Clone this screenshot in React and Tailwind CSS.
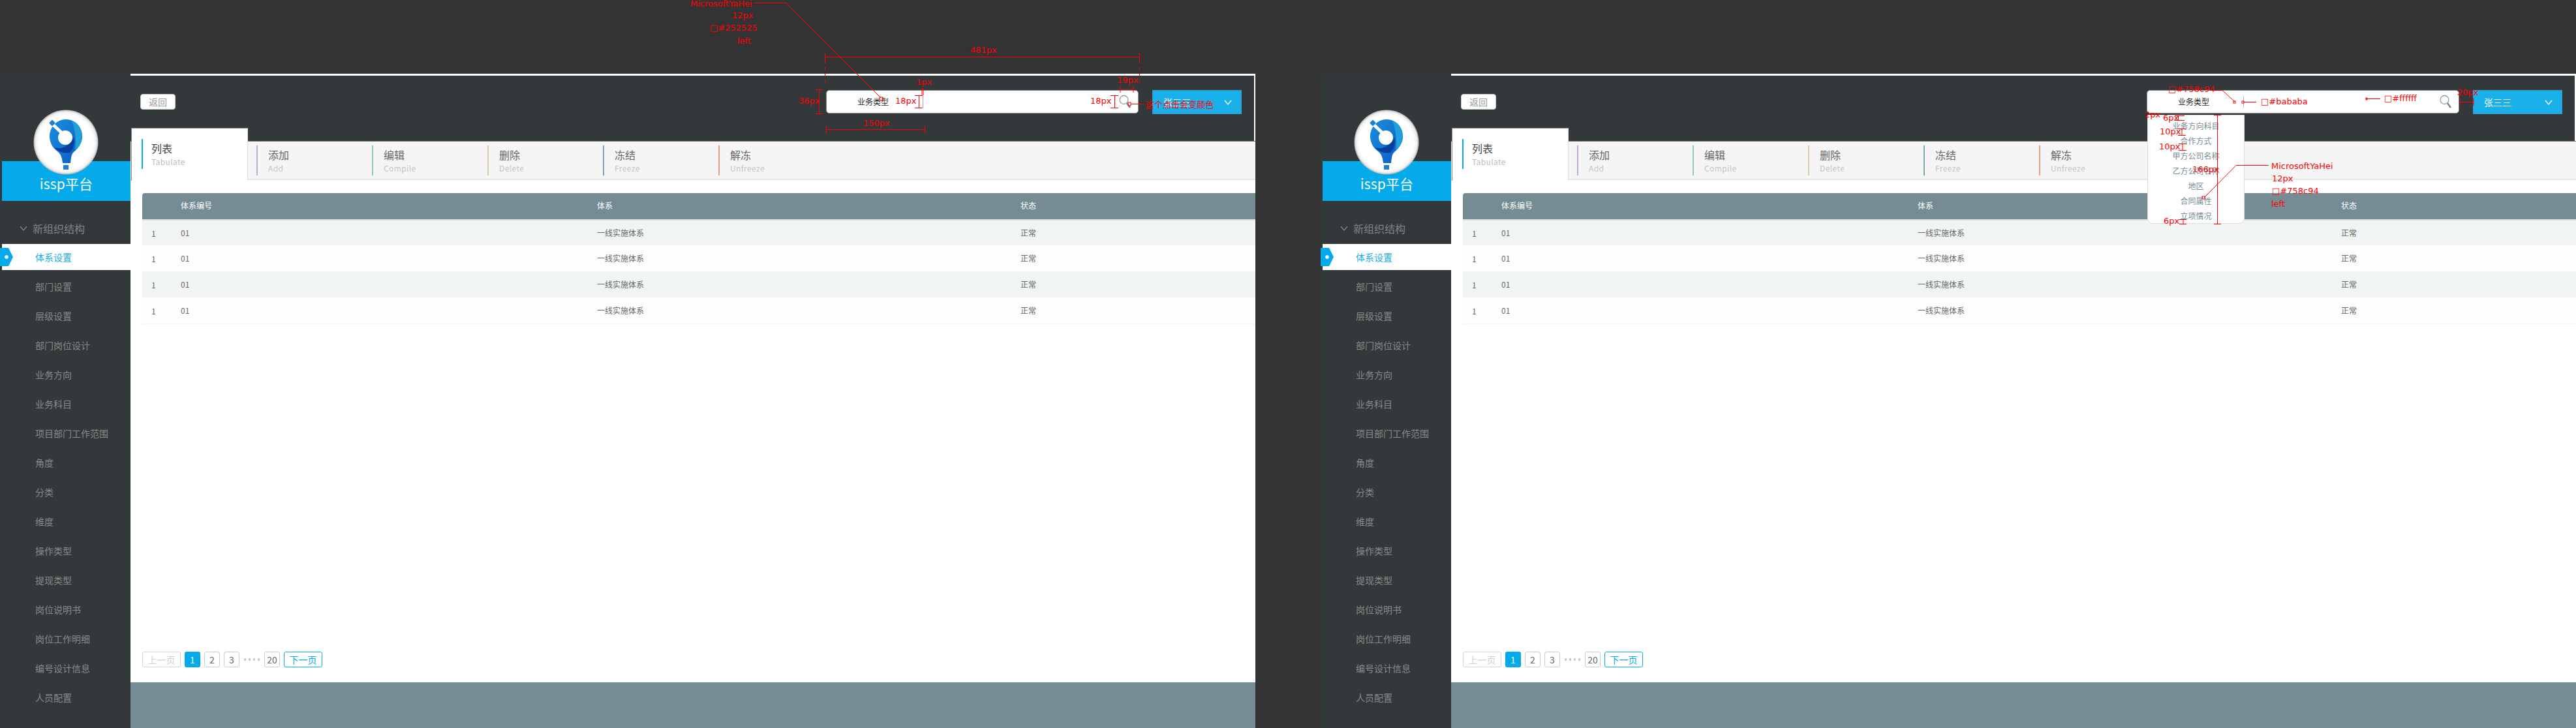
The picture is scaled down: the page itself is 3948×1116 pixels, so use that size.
import React from "react";

const menu = ["体系设置","部门设置","层级设置","部门岗位设计","业务方向","业务科目","项目部门工作范围","角度","分类","维度","操作类型","提现类型","岗位说明书","岗位工作明细","编号设计信息","人员配置"];
const tabs = [
  { t: "添加", s: "Add", c: "bg-[#c2a9d6]" },
  { t: "编辑", s: "Compile", c: "bg-[#8fc6c0]" },
  { t: "删除", s: "Delete", c: "bg-[#d8c8ae]" },
  { t: "冻结", s: "Freeze", c: "bg-[#7aa6b0]" },
  { t: "解冻", s: "Unfreeze", c: "bg-[#ec9c80]" },
];
const dropdown = ["业务方向科目","合作方式","甲方公司名称","乙方公司名称","地区","合同属性","立项情况"];

function Logo() {
  return (
    <svg width="100" height="100" viewBox="0 0 100 100" className="relative z-10 block">
      <defs>
        <radialGradient id="ring" cx="50%" cy="50%" r="50%">
          <stop offset="84%" stopColor="#ffffff" />
          <stop offset="94%" stopColor="#f0f0f0" />
          <stop offset="100%" stopColor="#b4b4b4" />
        </radialGradient>
        <linearGradient id="blue" x1="0" y1="0" x2="1" y2="1">
          <stop offset="0%" stopColor="#1b8fe0" />
          <stop offset="100%" stopColor="#0a5cc0" />
        </linearGradient>
      </defs>
      <circle cx="50" cy="50" r="49.5" fill="url(#ring)" />
      <path d="M50 15 C65 15 75 28 75 41 C75 52 68 60 62 65 C58 69 58 74 57 82 L45 82 C44 74 43 69 37 64 C30 59 25 51 25 41 C25 27 36 15 50 15 Z" fill="url(#blue)" />
      <path d="M59 17 C69 20 75 30 75 41 C75 50 70 58 64 63 C66 50 65 33 59 17 Z" fill="#1fa0dd" />
      <path d="M33 58 C44 62 56 56 62 42 C64 50 63 60 56 66 C48 68 38 65 33 58 Z" fill="#0b3f9e" />
      <path d="M27 20 L44 36" stroke="#ffffff" strokeWidth="5" />
      <circle cx="49" cy="43" r="11" fill="#ffffff" />
      <rect x="25.500" y="17" width="7" height="7" rx="1" transform="rotate(45 29 20.500)" fill="#1a7fd8" />
      <rect x="46" y="85" width="8" height="7" fill="#1a7fd8" />
    </svg>
  );
}

function Chevron({ className }) {
  return (
    <svg width="12" height="8" viewBox="0 0 12 8" fill="none" className={className}>
      <path d="M1 1 L6 7 L11 1" stroke="currentColor" strokeWidth="1.200" />
    </svg>
  );
}

function Sidebar() {
  return (
    <aside className="w-[200px] shrink-0 bg-[#33383b] flex flex-col pt-[55px] overflow-hidden">
      <div className="ml-[2px] w-[198px] flex justify-center"><Logo /></div>
      <div className="ml-[3px] -mt-[21px] h-[61px] bg-[#05aaea] flex justify-center pt-[19px] text-white text-[21px] leading-[30px] tracking-[0.2px]">issp平台</div>
      <div className="mt-[22px] h-[40px] mb-[4px] flex items-center pl-[30px] text-[16px] text-[#858585]">
        <Chevron className="mr-[8px] text-[#858585]" />
        新组织结构
      </div>
      <div className="flex flex-col gap-[5px]">
        {menu.map((m, i) => (
          <div key={m} className={i === 0 ? "relative ml-[3px] h-[40px] bg-white pl-[51px] flex items-center text-[14px] text-[#14aeea]" : "ml-[3px] h-[40px] pl-[51px] flex items-center text-[14px] text-[#8a8a8a]"}>
            {i === 0 && (
              <svg width="20" height="28" viewBox="0 0 20 28" className="absolute -left-[3px] top-[6px]">
                <path d="M0 0 H13 L20 14 L13 28 H0 Z" fill="#05aaea" />
                <circle cx="10" cy="14" r="2.800" fill="#ffffff" />
              </svg>
            )}
            {m}
          </div>
        ))}
      </div>
    </aside>
  );
}

function Header({ open }) {
  return (
    <div className="h-[100px] bg-[#33383b] border-r-2 border-white flex items-start pt-[22px] pr-[19px]">
      <button className="mt-[6px] ml-[15px] w-[54px] h-[24px] rounded-[4px] bg-white border border-[#cccccc] text-[14px] leading-[20px] text-[#999999]">返回</button>
      <div className="relative ml-auto w-[479px] h-[36px] bg-white rounded-[5px] border border-[#8a8a8a] flex items-center">
        <span className="w-[147px] pl-[47px] text-[12px] text-[#252525]">业务类型</span>
        <span className={open ? "w-px h-[18px] bg-[#bababa]" : "w-px h-[18px] bg-[#bb88dd]"} />
        <svg width="22" height="22" viewBox="0 0 22 22" fill="none" className="ml-auto mr-[8px]">
          <circle cx="8.500" cy="8" r="6.500" stroke="#8fa0a6" strokeWidth="1.300" />
          <path d="M13 13 L18 20" stroke="#6f8790" strokeWidth="2.400" />
        </svg>
        {open && (
          <div className="absolute left-0 top-[37px] w-[149px] h-[167px] bg-white border border-[#dddddd] rounded-b-[8px] pt-[4px] flex flex-col items-center z-10">
            {dropdown.map((d) => (
              <div key={d} className="h-[23px] leading-[23px] text-[12px] text-[#758c94]">{d}</div>
            ))}
          </div>
        )}
      </div>
      <div className="ml-[21px] w-[137px] h-[37px] bg-[#1ab1ea] border border-[#3f94c8] flex items-center pl-[16px] pr-[14px] text-[14px] text-white">
        张三三
        <Chevron className="ml-auto text-white" />
      </div>
    </div>
  );
}

function Tabs() {
  return (
    <div className="h-[60px] bg-[#f5f5f5] border-t border-t-[#777777] border-b-2 border-b-[#e5e5e5] flex">
      <div className="relative ml-px -mt-[21px] w-[179px] h-[81px] bg-white border-t border-x border-[#888888] border-r-[#dddddd] pt-[16px] pl-[15px] flex shrink-0">
        <span className="w-[2px] h-[46px] bg-[#05aaea]" />
        <div className="pl-[13px] pt-[2px]">
          <div className="text-[16px] leading-[24px] text-[#444444]">列表</div>
          <div className="text-[12px] leading-[18px] text-[#bbbbbb] tracking-[0.4px]">Tabulate</div>
        </div>
      </div>
      <div className="flex ml-[13px] pt-[6px]">
        {tabs.map((t) => (
          <div key={t.t} className="w-[177px] flex">
            <span className={"w-[2px] h-[46px] " + t.c} />
            <div className="pl-[16px] pt-[2px]">
              <div className="text-[16px] leading-[24px] text-[#666666]">{t.t}</div>
              <div className="text-[12px] leading-[18px] text-[#c4c4c4] tracking-[0.4px]">{t.s}</div>
            </div>
          </div>
        ))}
      </div>
    </div>
  );
}

function Table() {
  return (
    <div className="ml-[18px] mt-[20px] border-b border-[#f3f3f3]">
      <div className="h-[42px] pb-[2px] bg-[#758c94] border-b-2 border-[#dddddd] rounded-tl-[4px] flex items-center text-[12px] text-white">
        <span className="w-[59px]" />
        <span className="w-[638px]">体系编号</span>
        <span className="w-[649px]">体系</span>
        <span>状态</span>
      </div>
      {[0, 1, 2, 3].map((i) => (
        <div key={i} className={(i === 0 ? "h-[38px] " : "h-[40px] ") + (i % 2 === 0 ? "bg-[#f0f5f3]" : "bg-[#fdfdfd]") + " flex items-center text-[12px] text-[#666666]"}>
          <span className="w-[59px] pl-[14px] pt-[2px]">1</span>
          <span className="w-[638px]">01</span>
          <span className="w-[649px]">一线实施体系</span>
          <span>正常</span>
        </div>
      ))}
    </div>
  );
}

function Pager() {
  const box = "h-[24px] rounded-[3px] border border-[#cccccc] flex items-center justify-center text-[14px] text-[#666666]";
  return (
    <div className="mt-auto mb-[23px] ml-[18px] flex items-center gap-[6px]">
      <div className="h-[24px] w-[59px] rounded-[3px] border border-[#d5d5d5] flex items-center justify-center text-[14px] text-[#d0d0d0]">上一页</div>
      <div className="h-[24px] w-[24px] rounded-[3px] bg-[#05aaea] flex items-center justify-center text-[14px] text-white">1</div>
      <div className={box + " w-[24px]"}>2</div>
      <div className={box + " w-[24px]"}>3</div>
      <div className="w-[26px] flex items-center justify-between px-[1px]">
        {[0, 1, 2, 3].map((d) => <span key={d} className="w-[3px] h-[4px] bg-[#cccccc]" />)}
      </div>
      <div className={box + " w-[24px]"}>20</div>
      <div className="h-[24px] w-[59px] rounded-[3px] border border-[#05aaea] flex items-center justify-center text-[14px] text-[#05aaea]">下一页</div>
    </div>
  );
}

function Panel({ open }) {
  return (
    <section className="w-[1924px] h-[1003px] flex shrink-0">
      <Sidebar />
      <main className="w-[1724px] flex flex-col bg-white border-t-[3px] border-white">
        <Header open={open} />
        <Tabs />
        <Table />
        <Pager />
        <div className="h-[70px] bg-[#758c94]" />
      </main>
    </section>
  );
}

const notes = [
  ["MicrosoftYaHei", "left-[1058px] top-[-2px]"],
  ["12px", "left-[1122px] top-[16px]"],
  ["□#252525", "left-[1088px] top-[35px]"],
  ["left", "left-[1130px] top-[55px]"],
  ["481px", "left-[1487px] top-[69px]"],
  ["1px", "left-[1404px] top-[118px]"],
  ["19px", "left-[1712px] top-[115px]"],
  ["36px", "left-[1224px] top-[147px]"],
  ["18px", "left-[1372px] top-[147px]"],
  ["18px", "left-[1671px] top-[147px]"],
  ["150px", "left-[1323px] top-[181px]"],
  ["这个点击会变颜色", "left-[1756px] top-[153px]"],
  ["□#758c94", "left-[3323px] top-[129px]"],
  ["□#bababa", "left-[3465px] top-[148px]"],
  ["□#ffffff", "left-[3654px] top-[143px]"],
  ["20px", "left-[3766px] top-[134px]"],
  ["2px", "left-[3287px] top-[168px]"],
  ["6px", "left-[3315px] top-[173px]"],
  ["10px", "left-[3310px] top-[194px]"],
  ["10px", "left-[3309px] top-[217px]"],
  ["166px", "left-[3360px] top-[252px]"],
  ["6px", "left-[3316px] top-[331px]"],
  ["MicrosoftYaHei", "left-[3481px] top-[247px]"],
  ["12px", "left-[3482px] top-[266px]"],
  ["□#758c94", "left-[3482px] top-[285px]"],
  ["left", "left-[3481px] top-[305px]"],
];

function Annotations() {
  return (
    <div className="absolute inset-0 pointer-events-none z-20">
      <svg width="3948" height="1116" className="absolute left-0 top-0" fill="none" stroke="#ff0000" strokeWidth="1">
        <path d="M1155.500 4.500 H1204.500 L1350 150" />
        <rect x="1348" y="149" width="5" height="5" />
        <path d="M1264.500 87.500 H1746.500 M1264.500 82 V93 M1746.500 82 V93" />
        <path d="M1264.500 93 V134 M1746.500 93 V134" strokeDasharray="4 6" />
        <path d="M1415 135 V146 M1413 135 V146" />
        <path d="M1717 137 H1737 M1717 132 V142 M1737 132 V142" />
        <path d="M1255.500 137 V175 M1250 137.500 H1261 M1250 174.500 H1261" />
        <path d="M1266.500 198.500 H1417.500 M1266.500 193 V204 M1417.500 193 V204" />
        <path d="M1408.500 146 V165 M1402 146.500 H1414 M1402 165.500 H1414" />
        <path d="M1708.500 146 V165 M1702 146.500 H1714 M1702 165.500 H1714" />
        <rect x="1729" y="157" width="4" height="5" />
        <path d="M1733 159.500 H1752" />
        <path d="M3390 138.500 H3406 L3425 156" />
        <rect x="3423" y="155" width="3" height="3" />
        <rect x="3436" y="155" width="3" height="3" />
        <path d="M3439 156.500 H3458" />
        <path d="M3626 151.500 H3648" />
        <rect x="3626" y="150" width="2" height="3" />
        <path d="M3770.500 150 V162 M3770.500 156.500 H3791 M3791 150 V162" />
        <path d="M3398.500 176 V343 M3393 176.500 H3404 M3393 343.500 H3404" />
        <path d="M3338.500 177 V184 M3333 177.500 H3348 M3333 184.500 H3348" />
        <path d="M3344 197 V207 M3338 197.500 H3350 M3338 207.500 H3350" />
        <path d="M3345 220 V230 M3339 220.500 H3351 M3339 230.500 H3351" />
        <path d="M3346 336 V343 M3340 336.500 H3351 M3340 343.500 H3351" />
        <path d="M3477 253.500 H3427 L3378 303" />
        <rect x="3375" y="301" width="4" height="4" />
      </svg>
      {notes.map(([t, c], i) => (
        <span key={i} className={"absolute text-[13px] leading-[16px] text-[#ff0000] whitespace-nowrap font-['DejaVu_Sans','Noto_Sans_CJK_SC',sans-serif] " + c}>{t}</span>
      ))}
    </div>
  );
}

export default function App() {
  return (
    <div className="relative w-[3948px] h-[1116px] overflow-hidden bg-[#333333] pt-[113px] font-['Noto_Sans_CJK_SC','Noto_Sans',sans-serif]">
      <div className="flex gap-[100px]">
        <Panel />
        <Panel open />
      </div>
      <Annotations />
    </div>
  );
}
